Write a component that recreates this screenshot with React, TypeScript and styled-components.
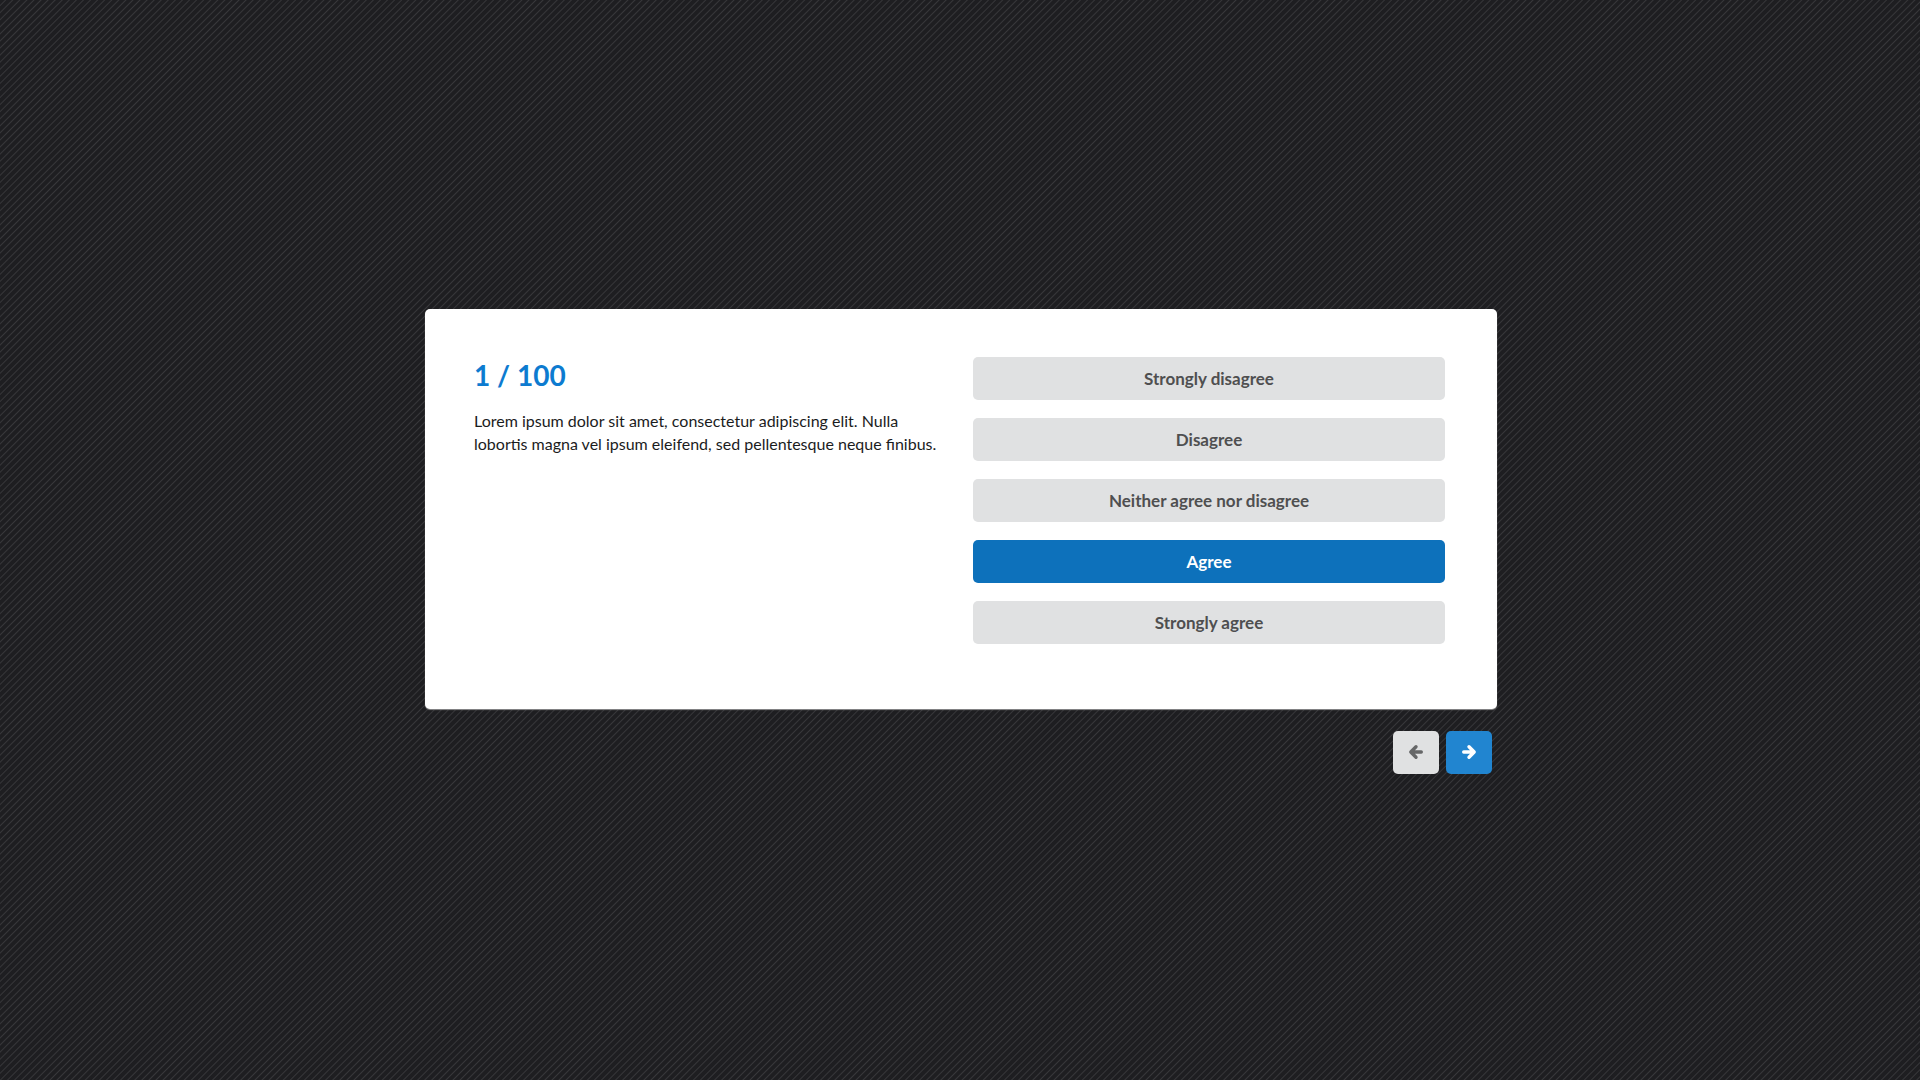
import React, { useState } from 'react';
import styled, { createGlobalStyle } from 'styled-components';

const GlobalStyle = createGlobalStyle`
  *, *::before, *::after {
    box-sizing: border-box;
  }
  body {
    margin: 0;
    background-color: #1f1f22;
    background-image: repeating-linear-gradient(
      135deg,
      #1e1e21 0,
      #1e1e21 3px,
      #37373a 4px,
      #1e1e21 5px
    );
    color: #1b1c1d;
    font-family: Lato, 'Liberation Sans', sans-serif;
    font-size: 17px;
    line-height: 23px;
  }
`;

const Page = styled.main`
  min-height: 100vh;
  display: flex;
  flex-direction: column;
  align-items: center;
  justify-content: center;
  padding: 24px 24px 22px 26px;
`;

const Survey = styled.div`
  width: 100%;
  max-width: 1072px;
`;

const Card = styled.section`
  display: grid;
  grid-template-columns: 1fr 472px;
  gap: 24px;
  min-height: 400px;
  padding: 48px 52px 48px 49px;
  background: #fff;
  border-radius: 5px;
  box-shadow: 0 1px 1px #8c8c8e;
`;

const Counter = styled.h1`
  margin: 0 0 16px;
  color: #0d7bd0;
  font-size: 28px;
  font-weight: 700;
  line-height: 36px;
`;

const Question = styled.p`
  margin: 0;
  font-size: 16px;
`;

const Answers = styled.div`
  display: flex;
  flex-direction: column;
  gap: 18px;
`;

const Button = styled.button`
  height: 43px;
  padding: 0 16px;
  border: 0;
  border-radius: 5px;
  background: #e0e1e2;
  color: #4f4f50;
  font: inherit;
  font-weight: 700;
  cursor: pointer;
`;

const Answer = styled(Button)`
  &[aria-pressed='true'] {
    background: #0d71bb;
    color: #fff;
  }
`;

const Navigation = styled.nav`
  display: flex;
  justify-content: flex-end;
  gap: 7px;
  padding: 22px 5px 0;
`;

const NavButton = styled(Button)<{ $primary?: boolean }>`
  display: flex;
  align-items: center;
  justify-content: center;
  width: 46px;
  padding: 0;
  background: ${({ $primary }) => ($primary ? '#2185d0' : '#e0e1e2')};
  color: ${({ $primary }) => ($primary ? '#fff' : '#666768')};
`;

const ArrowSvg = styled.svg<{ $flip?: boolean }>`
  width: 16px;
  height: 16px;
  fill: none;
  stroke: currentColor;
  stroke-linecap: round;
  stroke-linejoin: round;
  transform: ${({ $flip }) => ($flip ? 'scaleX(-1)' : 'none')};
`;

function Arrow({ back }: { back?: boolean }) {
  return (
    <ArrowSvg $flip={back} viewBox="0 0 16 16" strokeWidth="3.4" aria-hidden="true">
      <path d="M2.700 8h10M8 2.800l5.200 5.200-5.200 5.200" />
    </ArrowSvg>
  );
}

const options = [
  'Strongly disagree',
  'Disagree',
  'Neither agree nor disagree',
  'Agree',
  'Strongly agree',
];

export default function App() {
  const [selected, setSelected] = useState('Agree');

  return (
    <>
      <GlobalStyle />
      <Page>
        <Survey>
          <Card>
            <div>
              <Counter>1 / 100</Counter>
              <Question>
                Lorem ipsum dolor sit amet, consectetur adipiscing elit. Nulla lobortis magna vel
                ipsum eleifend, sed pellentesque neque finibus.
              </Question>
            </div>
            <Answers>
              {options.map((option) => (
                <Answer
                  key={option}
                  type="button"
                  aria-pressed={option === selected}
                  onClick={() => setSelected(option)}
                >
                  {option}
                </Answer>
              ))}
            </Answers>
          </Card>
          <Navigation>
            <NavButton type="button" aria-label="Previous question">
              <Arrow back />
            </NavButton>
            <NavButton type="button" aria-label="Next question" $primary>
              <Arrow />
            </NavButton>
          </Navigation>
        </Survey>
      </Page>
    </>
  );
}
